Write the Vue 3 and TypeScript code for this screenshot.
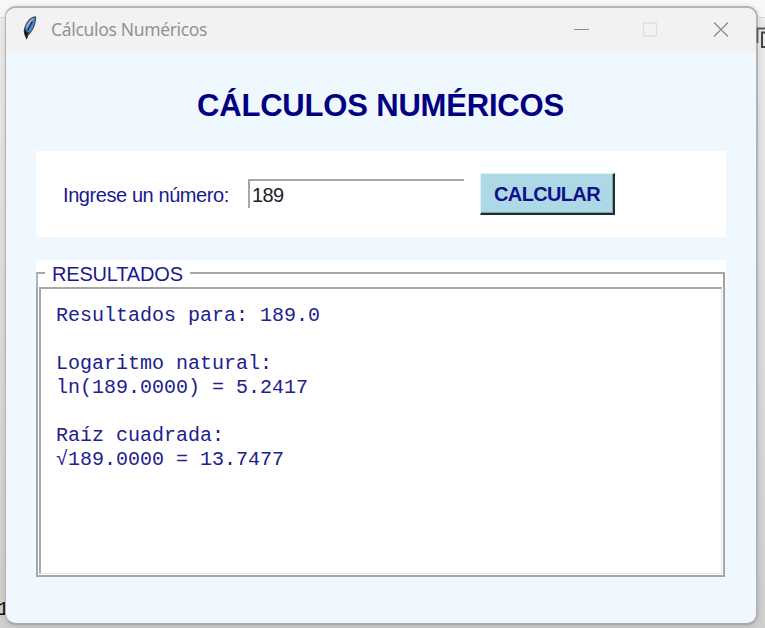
<script setup lang="ts">
import { ref } from 'vue'

const entry = ref('189')
const output = ref('')

function calculate(): void {
  const n = Number(entry.value)
  if (!Number.isFinite(n) || n <= 0) return
  output.value = [
    `Resultados para: ${Number.isInteger(n) ? n.toFixed(1) : n}`,
    '',
    'Logaritmo natural:',
    `ln(${n.toFixed(4)}) = ${Math.log(n).toFixed(4)}`,
    '',
    'Raíz cuadrada:',
    `√${n.toFixed(4)} = ${Math.sqrt(n).toFixed(4)}`,
  ].join('\n')
}

calculate()
</script>

<template>
  <div class="desktop">
    <span class="behind-text">1</span>
    <main class="window">
      <header class="titlebar">
        <svg class="feather" width="16" height="26" viewBox="0 0 16 26">
          <path d="M13.5 1.8C9.500 2.200 5.500 6 3.500 11C2 15 2 18 3.200 20L4.600 23.500L6 20C10 16.500 12.500 11 13.300 6C13.600 4 13.800 2.800 13.500 1.800Z" fill="#4a86d2" stroke="#4c4c4c" stroke-width="1.200" />
          <path d="M11.200 3.800C8.500 5.500 6 8.500 4.800 12" fill="none" stroke="#9dbde6" stroke-width="1.400" />
          <path d="M10.500 6.500C8.800 9.500 6.600 13 5.800 16" fill="none" stroke="#16233a" stroke-width="1.100" />
          <path d="M2.600 13.500V18.500L4.600 24L5.600 19.500L7.500 17L5.200 17.500Z" fill="#151515" />
        </svg>
        <span class="caption">Cálculos Numéricos</span>
        <svg class="controls" width="158" height="18" viewBox="0 0 158 18">
          <path d="M1 9.500H16" stroke="#8e8e8e" stroke-width="1" />
          <rect x="70.500" y="3" width="13" height="13" rx="0.500" fill="none" stroke="#dfdfdf" stroke-width="1.300" />
          <path d="M141 2.500L155 16.500M155 2.500L141 16.500" stroke="#8c8c8c" stroke-width="1.200" />
        </svg>
      </header>
      <section class="body">
        <h1 class="heading">CÁLCULOS NUMÉRICOS</h1>
        <form class="form" @submit.prevent="calculate">
          <label class="label" for="number">Ingrese un número:</label>
          <input id="number" v-model="entry" class="entry" type="text" autocomplete="off" />
          <button class="button" type="submit">CALCULAR</button>
        </form>
        <section class="results">
          <div class="legend-row">
            <span class="line lead"></span>
            <h2 class="legend">RESULTADOS</h2>
            <span class="line rest"></span>
          </div>
          <div class="frame">
            <pre class="output">{{ output }}</pre>
          </div>
        </section>
      </section>
    </main>
    <svg class="behind-icon" width="9" height="24" viewBox="0 0 9 24">
      <path d="M1.500 17V2.500H9" fill="none" stroke="#5a5a5a" stroke-width="1.800" />
      <path d="M9 6.500H6V21H9" fill="none" stroke="#444" stroke-width="2" />
    </svg>
  </div>
</template>

<style>
body {
  margin: 0;
  overflow: hidden;
}
</style>

<style scoped>
.desktop {
  position: relative;
  box-sizing: border-box;
  width: 765px;
  height: 628px;
  padding: 6px 7px 3px 5px;
  overflow: hidden;
  background: linear-gradient(#f8f8f8 0 17px, #d8d8d8 17px 18px, #ececec 18px, #dedede 300px, #cfcfcf 628px);
  font-family: "Liberation Sans", Arial, sans-serif;
}
.behind-text {
  position: absolute;
  left: -3px;
  top: 598px;
  color: #111;
  font: 21px/24px "Liberation Mono", monospace;
}
.behind-icon {
  position: absolute;
  left: 756px;
  top: 26px;
}
.window {
  position: relative;
  box-sizing: border-box;
  height: 619px;
  border: 2px solid #b4b4b4;
  border-left-width: 1px;
  border-bottom-color: #a9a9a9;
  border-radius: 11px;
  overflow: hidden;
  background: #eff7ff;
  box-shadow: 0 1px 6px rgba(0, 0, 0, 0.14);
}
.titlebar {
  display: flex;
  align-items: center;
  box-sizing: border-box;
  height: 45px;
  padding: 0 25px 0 16px;
  background: #f2f2f2;
}
.feather {
  margin-top: -5px;
}
.caption {
  margin: -4px 0 0 13px;
  color: #929292;
  font: 17.5px/24px "Noto Sans", sans-serif;
  letter-spacing: -0.33px;
  white-space: nowrap;
}
.controls {
  margin: -4px 0 0 auto;
}
.body {
  padding: 34px 29px 0 30px;
}
.heading {
  margin: 0;
  padding-right: 2px;
  color: #000080;
  font-size: 31px;
  font-weight: bold;
  line-height: 38px;
  letter-spacing: -0.18px;
  text-align: center;
  white-space: nowrap;
}
.form {
  display: flex;
  align-items: flex-start;
  box-sizing: border-box;
  width: 690px;
  height: 86px;
  margin-top: 26px;
  padding: 22px 27px 0;
  background: #fff;
}
.label {
  width: 185px;
  margin-top: 10px;
  color: #191990;
  font-size: 20px;
  line-height: 24px;
  letter-spacing: -0.42px;
  white-space: nowrap;
}
.entry {
  box-sizing: border-box;
  width: 216px;
  height: 29px;
  margin: 6px 16px 0 0;
  padding: 2px 0 0 2px;
  border: solid #a7a7a7;
  border-width: 2px 0 0 2px;
  border-radius: 0;
  outline: none;
  background: #fff;
  color: #222;
  font: 20px/24px "Liberation Sans", Arial, sans-serif;
  letter-spacing: -0.6px;
}
.button {
  box-sizing: border-box;
  width: 135px;
  height: 42px;
  padding: 0;
  border: solid #202d31;
  border-width: 1px 2px 2px 1px;
  border-top-color: #e4f2f6;
  border-left-color: #e4f2f6;
  border-radius: 0;
  background: #add8e6;
  box-shadow: inset -1px -1px #80a0aa;
  color: #10108a;
  font: bold 20px/24px "Liberation Sans", Arial, sans-serif;
  letter-spacing: -0.65px;
}
.results {
  width: 690px;
  height: 317px;
  margin-top: 23px;
  background: linear-gradient(90deg, #fff 688px, #eff7ff 688px);
}
.legend-row {
  display: flex;
  align-items: flex-start;
  height: 27px;
  background: #fff;
}
.line {
  box-sizing: border-box;
  height: 15px;
  margin-top: 12px;
  border-top: 2px solid #a7a7a7;
}
.lead {
  width: 9px;
  border-left: 2px solid #b4b4b4;
}
.legend {
  width: 145px;
  box-sizing: border-box;
  margin: 0;
  padding-left: 7px;
  color: #191990;
  font-size: 20px;
  font-weight: normal;
  line-height: 28px;
  letter-spacing: -0.18px;
}
.rest {
  width: 535px;
  border-right: 2px solid #a2a2a2;
}
.frame {
  box-sizing: border-box;
  width: 689px;
  height: 290px;
  padding: 0 1px 1px;
  border: solid #a7a7a7;
  border-width: 0 2px 2px;
}
.output {
  box-sizing: border-box;
  height: 287px;
  margin: 0;
  padding: 15px 0 0 15px;
  border: 2px solid #a7a7a7;
  border-right: 1px solid #e6e6e6;
  border-bottom: 1px solid #e6e6e6;
  color: #20208f;
  font: 20px/24px "Liberation Mono", "Courier New", monospace;
}
</style>
